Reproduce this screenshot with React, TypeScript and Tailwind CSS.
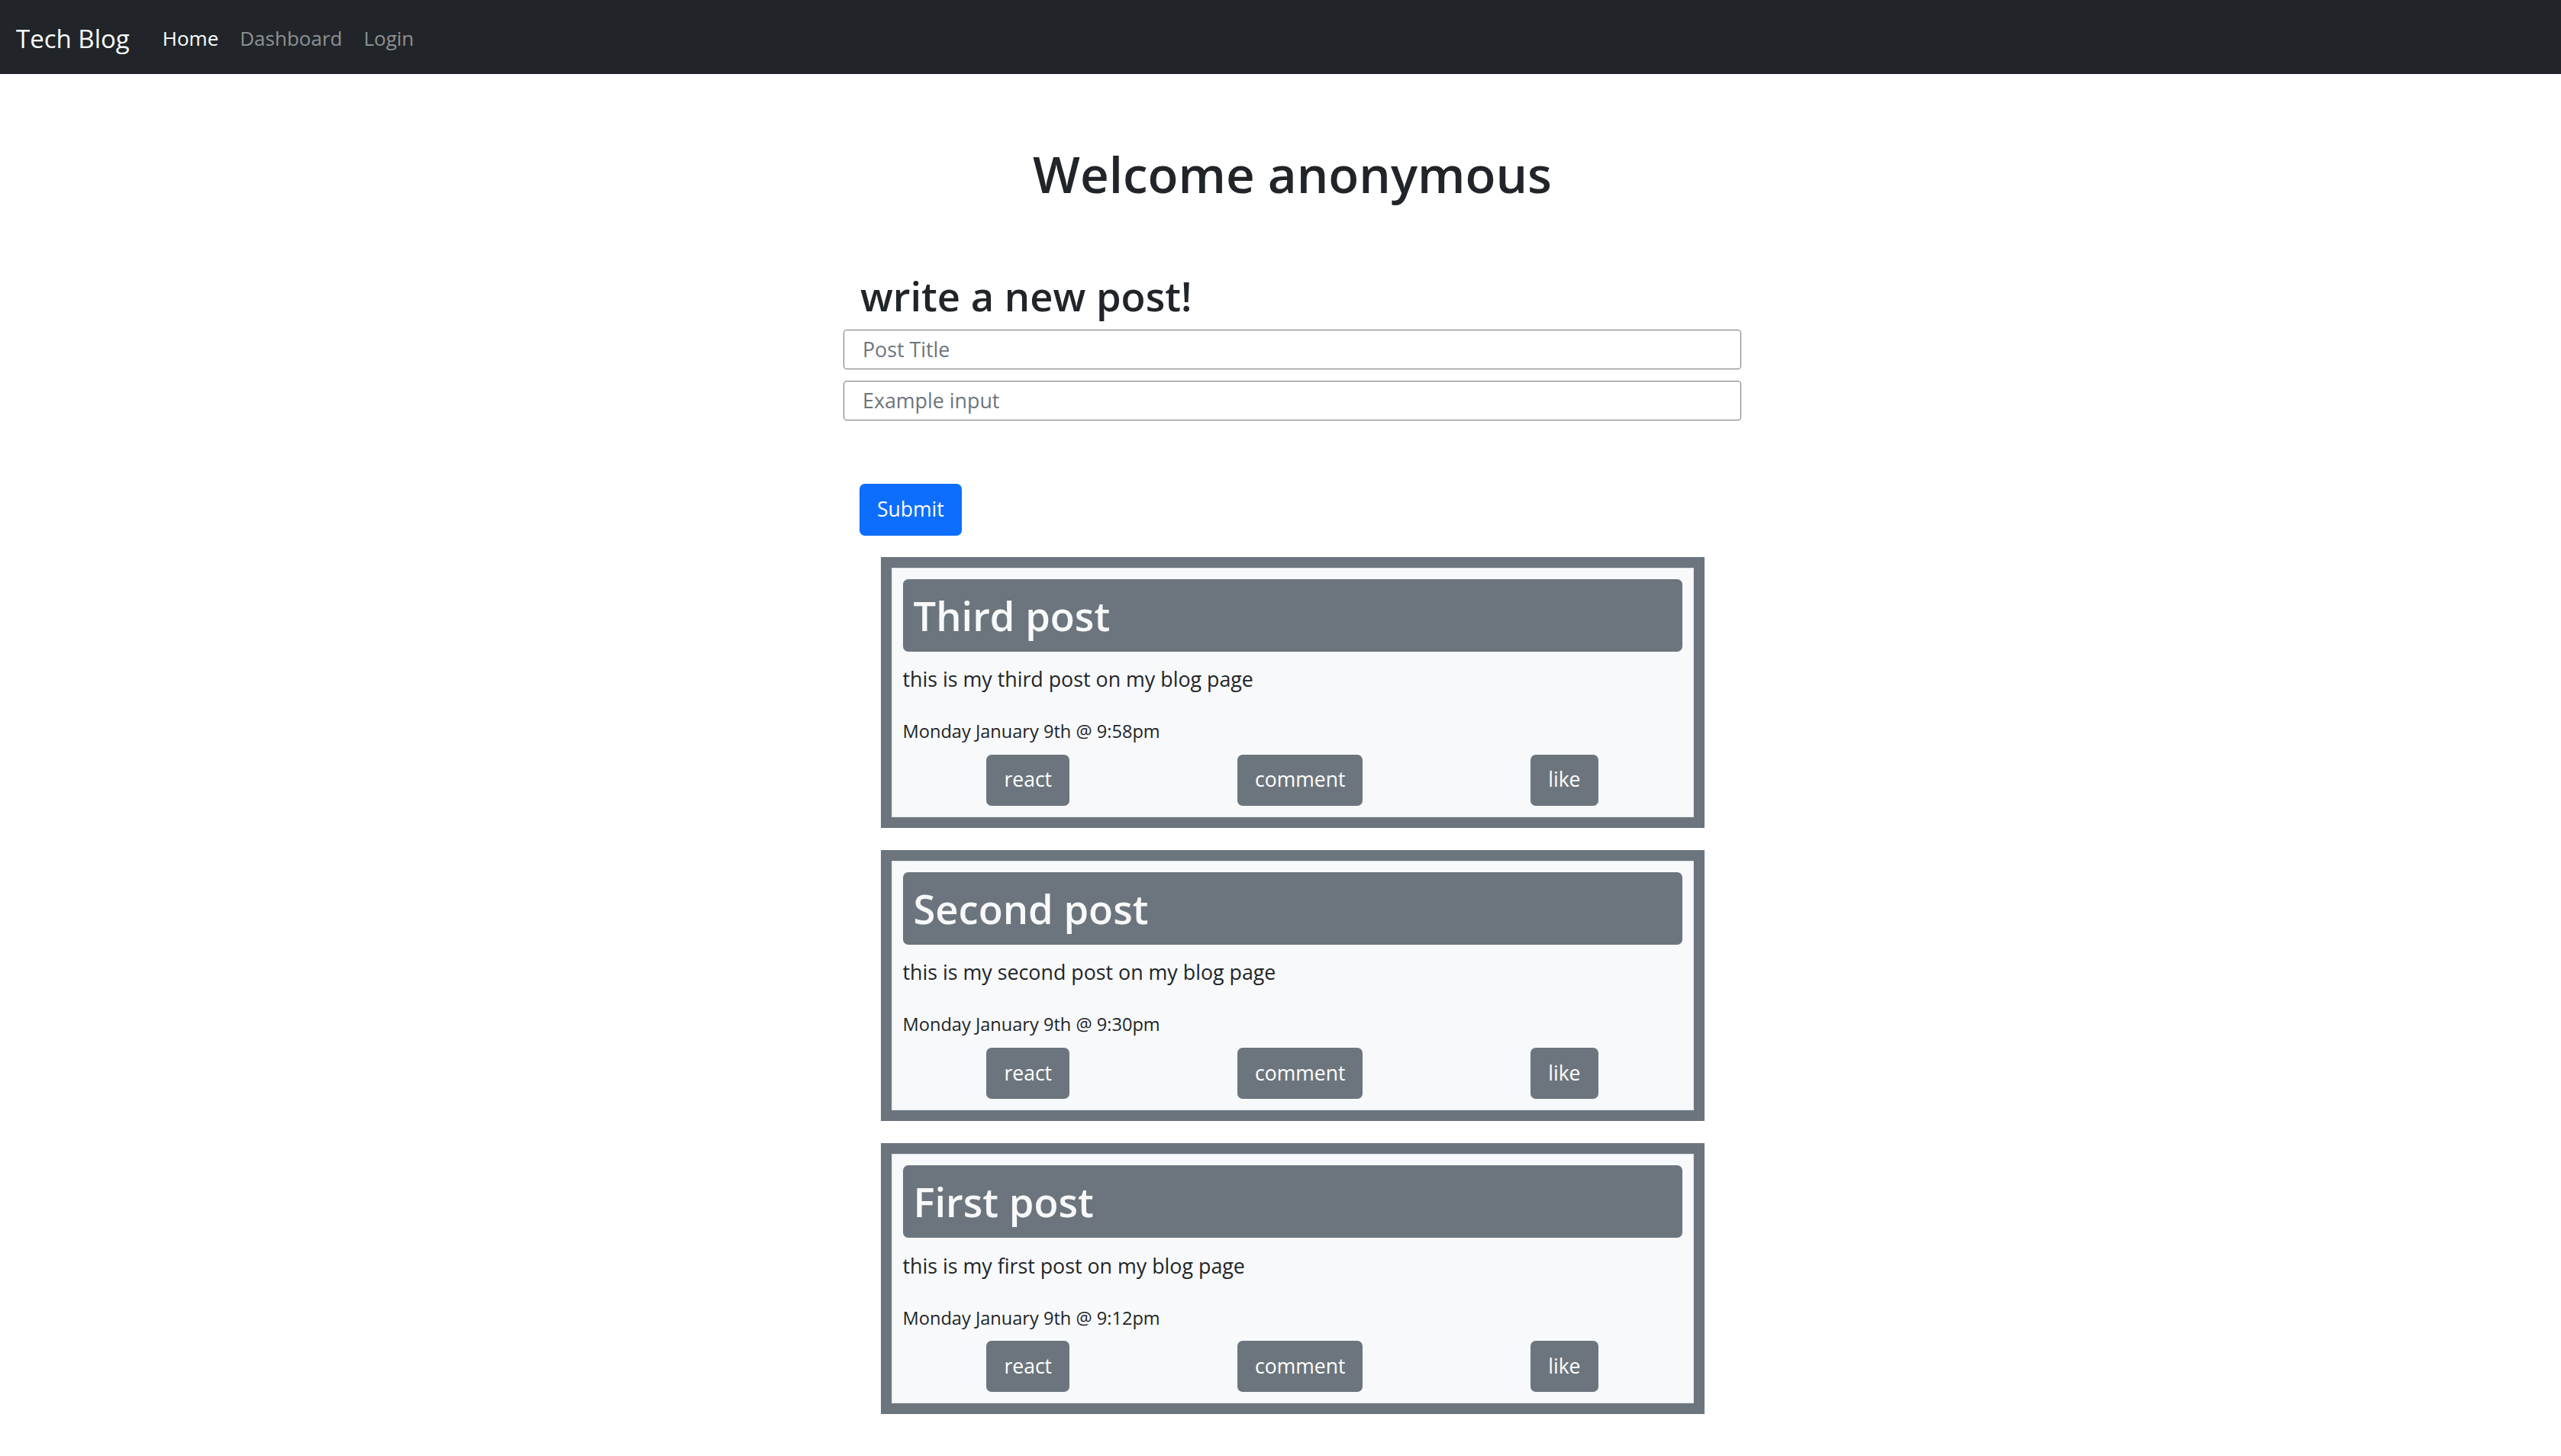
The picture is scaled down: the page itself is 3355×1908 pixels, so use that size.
import React from 'react'

const posts = [
  { title: 'Third post', body: 'this is my third post on my blog page', date: 'Monday January 9th @ 9:58pm' },
  { title: 'Second post', body: 'this is my second post on my blog page', date: 'Monday January 9th @ 9:30pm' },
  { title: 'First post', body: 'this is my first post on my blog page', date: 'Monday January 9th @ 9:12pm' },
]

function Navbar() {
  return (
    <nav className="h-[97px] bg-[#212529] flex items-center pl-[21px] pt-[3px]">
      <a href="#" className="text-white text-[33px] leading-none mr-[43px]">Tech Blog</a>
      <div className="flex items-center gap-[28px] text-[26px] leading-none">
        <a href="#" className="text-white">Home</a>
        <a href="#" className="text-[#8f9194]">Dashboard</a>
        <a href="#" className="text-[#8f9194]">Login</a>
      </div>
    </nav>
  )
}

function PostCard({ title, body, date }: { title: string; body: string; date: string }) {
  return (
    <div className="w-[1079px] mx-auto border-[14px] border-[#6c757d]">
      <div className="border border-[#dee2e6] bg-[#f8f9fa] p-[14px]">
        <div className="h-[95px] rounded-[7px] bg-[#6c757d] flex items-center px-[14px]">
          <h2 className="text-[#f8f9fa] text-[52.5px] leading-[1.2] font-semibold">{title}</h2>
        </div>
        <p className="mt-[16.5px] text-[26.8px] leading-[1.5] text-[#212529]">{body}</p>
        <p className="mt-[30.7px] text-[23.6px] leading-[1.5] text-[#212529]">{date}</p>
        <div className="mt-[12.5px] flex justify-around">
          <button className="h-[67px] px-[23px] rounded-[7px] bg-[#6c757d] text-white text-[26.5px]">react</button>
          <button className="h-[67px] px-[23px] rounded-[7px] bg-[#6c757d] text-white text-[26.5px]">comment</button>
          <button className="h-[67px] px-[23px] rounded-[7px] bg-[#6c757d] text-white text-[26.5px]">like</button>
        </div>
      </div>
    </div>
  )
}

export default function App() {
  return (
    <div className="min-h-screen bg-white font-['Open_Sans',sans-serif] text-[#212529]">
      <Navbar />
      <main className="pl-[31px] pb-[55px]">
        <h1 className="mt-[92px] text-center text-[65.5px] leading-[1.2] font-semibold">Welcome anonymous</h1>

        <form className="w-[1176px] mx-auto" onSubmit={(e) => e.preventDefault()}>
          <h2 className="mt-[88px] ml-[22px] text-[52.5px] leading-[1.2] font-semibold">write a new post!</h2>
          <input
            type="text"
            placeholder="Post Title"
            className="block w-full mt-[13px] h-[52px] pl-[24px] border border-[#767676] rounded-[4px] text-[26.8px] placeholder:text-[#6c757d] outline-none"
          />
          <input
            type="text"
            placeholder="Example input"
            className="block w-full mt-[15px] h-[52px] pl-[24px] border border-[#767676] rounded-[4px] text-[26.8px] placeholder:text-[#6c757d] outline-none"
          />
          <button
            type="submit"
            className="mt-[83px] ml-[21px] h-[68px] px-[23px] rounded-[7px] bg-[#0d6efd] text-white text-[26.5px]"
          >
            Submit
          </button>
        </form>

        <div className="mt-[28px] flex flex-col gap-[29px]">
          {posts.map((p) => (
            <PostCard key={p.title} {...p} />
          ))}
        </div>
      </main>
    </div>
  )
}
